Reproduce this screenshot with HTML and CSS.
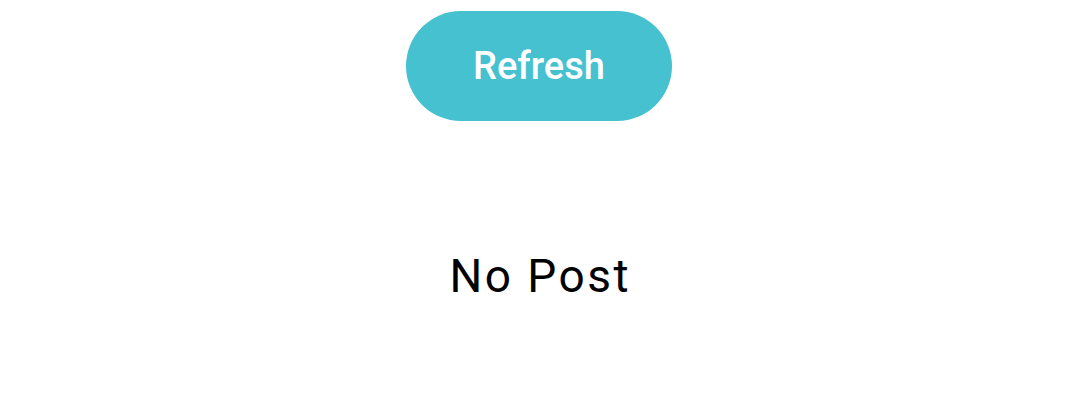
FILE: index.html
```html
<!DOCTYPE html>
<html>
<head>
<meta charset="utf-8">
<link rel="stylesheet" href="styles.css">
</head>
<body>
<main class="page">
  <button class="refresh-btn" type="button">Refresh</button>
  <p class="empty">No Post</p>
</main>
</body>
</html>
```
FILE: styles.css
```css
html, body {
  margin: 0;
  padding: 0;
  background: #ffffff;
}
.page {
  display: flex;
  flex-direction: column;
  align-items: center;
  padding-top: 11px;
  font-family: Roboto, "Noto Sans", sans-serif;
}
.refresh-btn {
  width: 266px;
  height: 110px;
  border: none;
  border-radius: 55px;
  background: #46c1d0;
  color: #ffffff;
  font-family: Roboto, "Noto Sans", sans-serif;
  font-weight: 500;
  font-size: 38px;
  line-height: 44px;
  padding: 0;
  margin: 0;
  display: flex;
  align-items: center;
  justify-content: center;
}
.empty {
  margin: 128px 0 0 0;
  padding-left: 2.5px;
  font-size: 46px;
  line-height: 54px;
  letter-spacing: 2.5px;
  color: #000000;
  font-weight: 400;
}
```
